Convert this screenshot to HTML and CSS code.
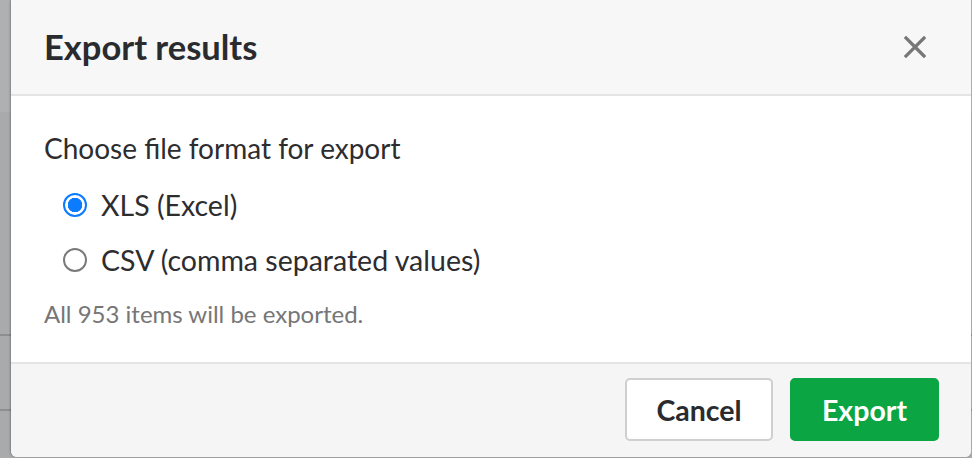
FILE: index.html
```html
<!DOCTYPE html>
<html lang="en">
<head>
<meta charset="utf-8">
<title>Export results</title>
<link rel="stylesheet" href="styles.css">
</head>
<body>
<div class="page">
  <div class="modal">
    <div class="modal-header">
      <h1 class="modal-title">Export results</h1>
      <button class="close" aria-label="Close">
        <svg width="22" height="22" viewBox="0 0 22 22"><path d="M2 2 L20 20 M20 2 L2 20" stroke="#777" stroke-width="3.2" stroke-linecap="square"/></svg>
      </button>
    </div>
    <div class="modal-body">
      <p class="label">Choose file format for export</p>
      <div class="options">
        <label class="option"><span class="radio checked"></span><span>XLS (Excel)</span></label>
        <label class="option"><span class="radio"></span><span>CSV (comma separated values)</span></label>
      </div>
      <p class="hint">All 953 items will be exported.</p>
    </div>
    <div class="modal-footer">
      <button class="btn btn-default">Cancel</button>
      <button class="btn btn-primary">Export</button>
    </div>
  </div>
</div>
</body>
</html>
```
FILE: styles.css
```css
html, body {
  margin: 0;
  padding: 0;
  height: 100%;
}
body {
  font-family: "Lato", "Liberation Sans", sans-serif;
  background:
    linear-gradient(#8d8e8f, #8d8e8f) 0 334px / 100% 2px no-repeat,
    linear-gradient(#8d8e8f, #8d8e8f) 0 409px / 100% 2px no-repeat,
    linear-gradient(#afb0b1, #afb0b1) 0 0 / 100% 112px no-repeat,
    #a9aaab;
  overflow: hidden;
}
.page {
  padding-left: 11px;
  width: 960px;
}
.modal {
  width: 960px;
  height: 457px;
  background: #fff;
  border-radius: 0 0 6px 6px;
  box-shadow: -1px 0 2px rgba(0,0,0,0.25);
  display: flex;
  flex-direction: column;
  overflow: hidden;
}
.modal-header {
  box-sizing: border-box;
  background: #f7f7f7;
  border-bottom: 2px solid #e4e4e4;
  display: flex;
  align-items: center;
  justify-content: space-between;
  padding: 0 45px 0 33px;
  flex: none;
  height: 96px;
}
.modal-title {
  margin: 0;
  font-size: 34.5px;
  font-weight: 700;
  color: #2a2b2f;
  line-height: 40px;
}
.close {
  border: 0;
  background: none;
  padding: 0;
  width: 22px;
  height: 22px;
  display: flex;
}
.modal-body {
  flex: 1;
  padding: 34px 33px 0;
  color: #2d2d30;
}
.label {
  margin: 0;
  font-size: 28px;
  line-height: 36px;
}
.options {
  margin: 21px 0 0 19px;
  display: flex;
  flex-direction: column;
  gap: 19px;
}
.option {
  display: flex;
  align-items: center;
  gap: 14px;
  font-size: 28.5px;
  line-height: 36px;
}
.radio {
  width: 24px;
  height: 24px;
  box-sizing: border-box;
  border: 2px solid #7a7a7a;
  border-radius: 50%;
  background: #fff;
  flex: none;
}
.radio.checked {
  border-color: #0b7bff;
  background: radial-gradient(circle, #0b7bff 0 7px, #fff 7.5px);
}
.hint {
  margin: 20px 0 0;
  font-size: 24px;
  line-height: 32px;
  color: #767676;
}
.modal-footer {
  flex: none;
  height: 95px;
  box-sizing: border-box;
  background: #f5f5f5;
  border-top: 2px solid #e4e4e4;
  display: flex;
  align-items: flex-start;
  justify-content: flex-end;
  gap: 17px;
  padding: 14px 32px 0 0;
}
.btn {
  height: 63px;
  width: 148px;
  border-radius: 5px;
  font-family: inherit;
  font-size: 28.5px;
  font-weight: 700;
  cursor: pointer;
}
.btn-default {
  background: #fff;
  border: 2px solid #cfcfcf;
  color: #2a2b2f;
}
.btn-primary {
  width: 149px;
  background: #0ba544;
  border: 2px solid #0ba544;
  color: #fff;
}
```
